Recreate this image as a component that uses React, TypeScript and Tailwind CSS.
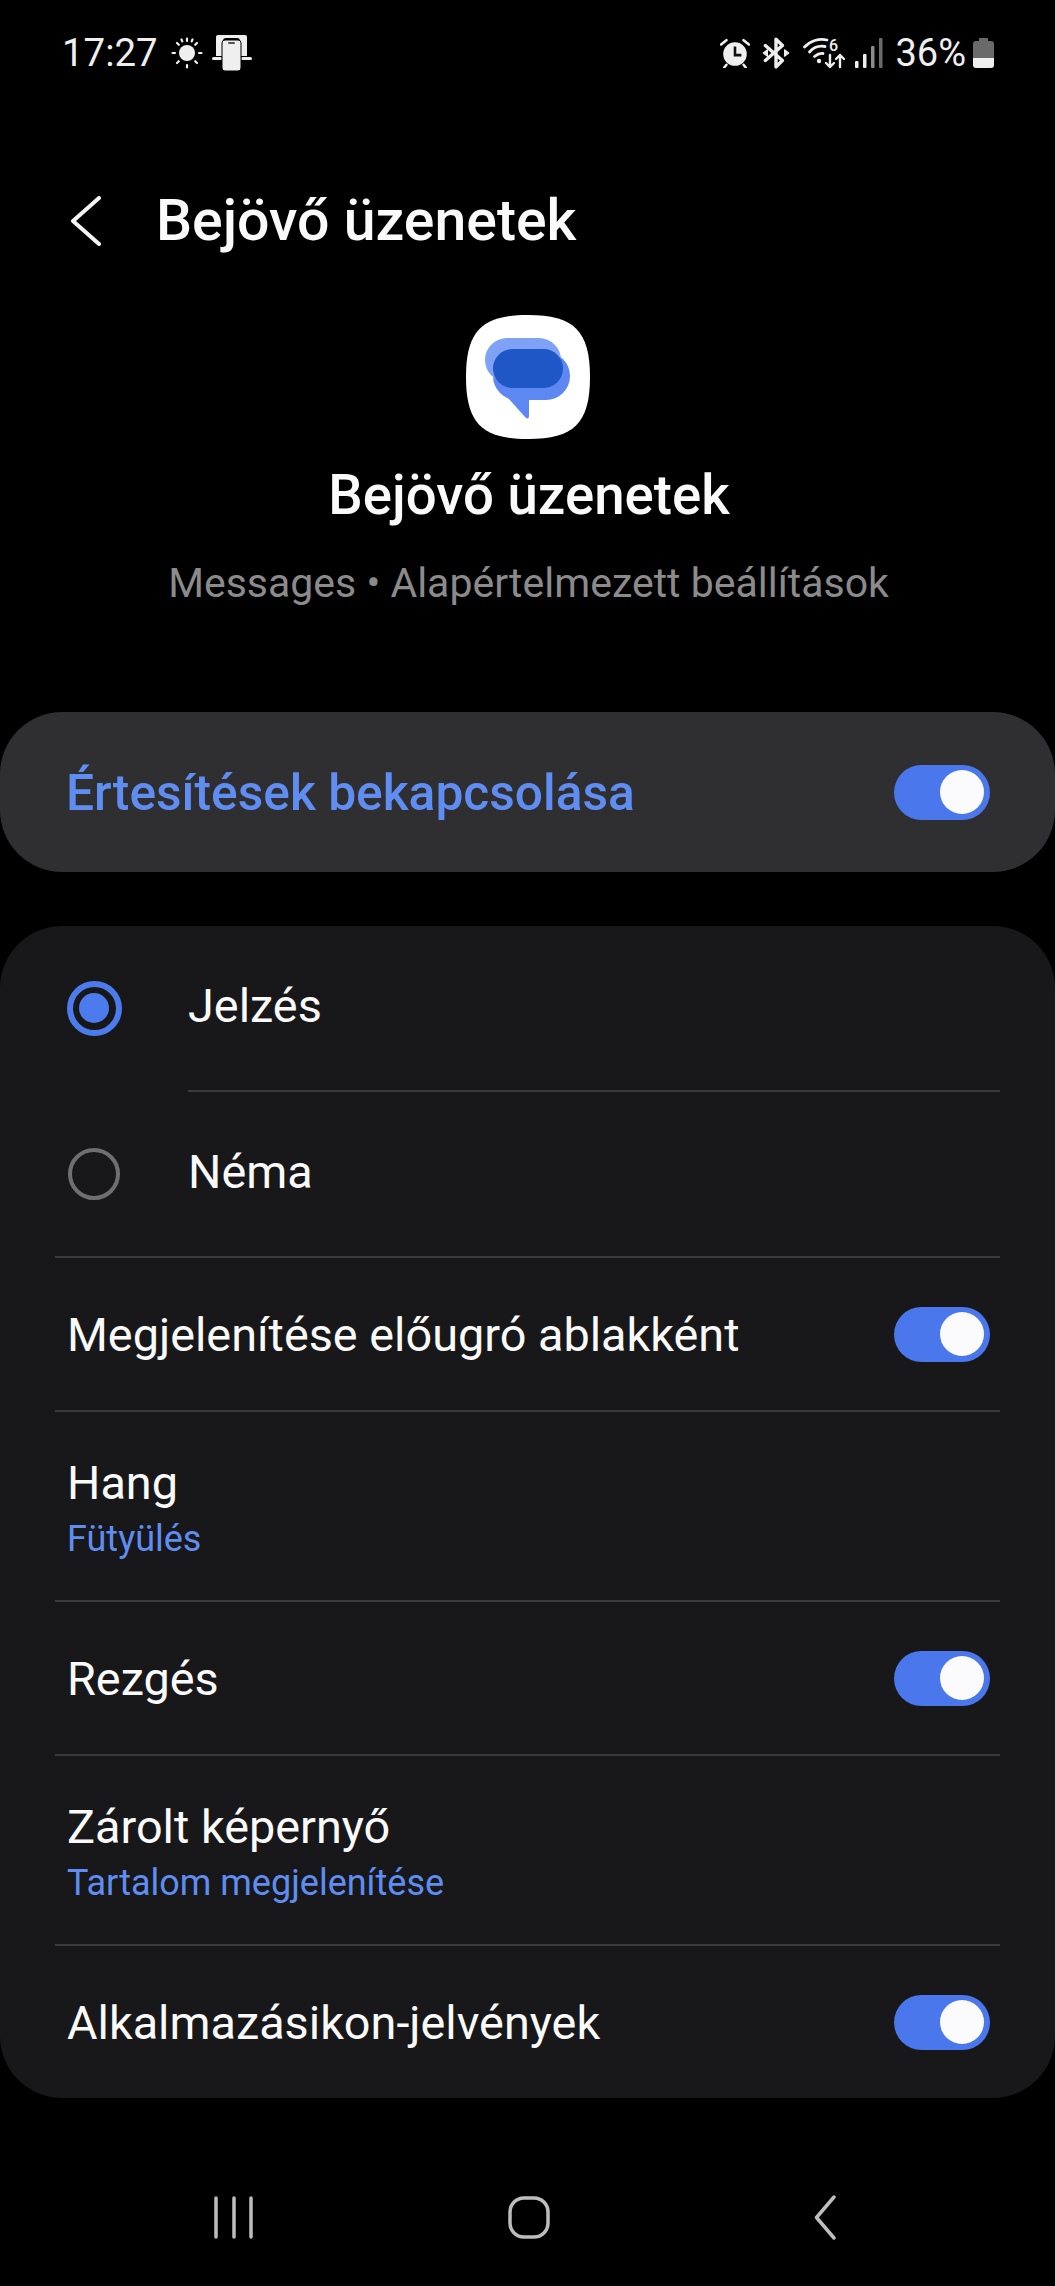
import React from "react";

const font = { fontFamily: "Roboto, 'Liberation Sans', sans-serif" };

function Toggle() {
  return (
    <div className="w-[96px] h-[55px] rounded-full bg-[#4a77ec] flex items-center justify-end pr-[6px] shrink-0">
      <div className="w-[44px] h-[44px] rounded-full bg-[#fbfbfd]" />
    </div>
  );
}

function Divider({ inset = false }: { inset?: boolean }) {
  return <div className={`h-[2px] bg-[#3a3a3c] mr-[55px] ${inset ? "ml-[188px]" : "ml-[55px]"}`} />;
}

function ToggleRow({ label }: { label: string }) {
  return (
    <div className="h-[152px] flex items-center justify-between pl-[67px] pr-[65px]">
      <span className="pt-[2px] text-[46.8px] leading-[56px] text-[#fafafa]">{label}</span>
      <Toggle />
    </div>
  );
}

function SubRow({ label, sub }: { label: string; sub: string }) {
  return (
    <div className="h-[188px] flex flex-col justify-center pt-[2px] pl-[67px] pr-[65px]">
      <span className="text-[46.8px] leading-[56px] text-[#fafafa]">{label}</span>
      <span className="text-[36px] leading-[42px] mt-[7px] text-[#5f8df2]">{sub}</span>
    </div>
  );
}

function RadioRow({ label, selected }: { label: string; selected?: boolean }) {
  return (
    <div className="h-[164px] flex items-center pl-[66px]">
      <div className="w-[56px] flex justify-center shrink-0">
        {selected ? (
          <div className="w-[55px] h-[55px] rounded-full border-[6px] border-[#4c7bee] flex items-center justify-center">
            <div className="w-[30px] h-[30px] rounded-full bg-[#4c7bee]" />
          </div>
        ) : (
          <div className="w-[52px] h-[52px] rounded-full border-[4px] border-[#6f6f70]" />
        )}
      </div>
      <span className="ml-[66px] mb-[4px] text-[46.8px] leading-[56px] text-[#fafafa]">{label}</span>
    </div>
  );
}

function SunIcon() {
  return (
    <svg width="32" height="32" viewBox="0 0 32 32" fill="#efefef" stroke="#efefef" strokeWidth="2.2" strokeLinecap="round">
      <circle cx="16" cy="16" r="8" stroke="none" />
      <path d="M16 1.5v2.5M16 28v2.5M1.5 16H4M28 16h2.5M6 6l1.8 1.8M24.2 24.2L26 26M6 26l1.8-1.8M24.2 7.8L26 6M10.5 2.5l.8 1.9M21.5 2.5l-.8 1.9" />
    </svg>
  );
}

function DeviceIcon() {
  return (
    <svg width="40" height="36" viewBox="0 0 40 36">
      <path d="M6 0h27a2 2 0 0 1 2 2v19h-2V2.500H6V21H4V2a2 2 0 0 1 2-2z" fill="#efefef" />
      <path d="M6 2h27v19h-5V6a3 3 0 0 0-3-3H14a3 3 0 0 0-3 3v15H6z" fill="#efefef" />
      <rect x="0" y="22" width="10" height="3" rx="1.500" fill="#efefef" />
      <rect x="29" y="22" width="11" height="3" rx="1.500" fill="#efefef" />
      <rect x="10" y="5" width="19" height="31" rx="3" fill="#efefef" stroke="#000" strokeWidth="1" />
      <rect x="16" y="7" width="7" height="2" rx="1" fill="#555" />
    </svg>
  );
}

function AlarmIcon() {
  return (
    <svg width="30" height="30" viewBox="0 0 28 28">
      <circle cx="14" cy="15" r="11" fill="#efefef" />
      <path d="M1 6l5-4M27 6l-5-4M6 25l-2 2.500M22 25l2 2.500" stroke="#efefef" strokeWidth="2.400" strokeLinecap="round" fill="none" />
      <path d="M14 8v8h6" stroke="#111" strokeWidth="2.400" fill="none" />
    </svg>
  );
}

function BluetoothIcon() {
  return (
    <svg width="28" height="32" viewBox="0 0 26 30" fill="none" stroke="#efefef" strokeWidth="3.200" strokeLinecap="round" strokeLinejoin="round">
      <path d="M3 8l16 14-6 6V2l6 6L3 22" />
      <path d="M21 12l4 3-4 3zM5 12L1 15l4 3z" fill="#efefef" strokeWidth="1" />
    </svg>
  );
}

function WifiIcon() {
  return (
    <svg className="overflow-visible" width="44" height="32" viewBox="0 0 44 32" fill="none" stroke="#efefef" strokeLinecap="round" strokeLinejoin="round">
      <path d="M1.500 10C7 4 16 1 24 3" strokeWidth="2.800" />
      <path d="M6.500 15C10 11 16 8.500 22 9.500" strokeWidth="2.800" />
      <path d="M11.500 19.500C14 17.500 17 16 20 16.500" strokeWidth="2.800" />
      <circle cx="16" cy="24" r="2.200" fill="#efefef" stroke="none" />
      <path d="M27 18v12M23 26l4 4 4-4M37 30V18M33 22l4-4 4 4" strokeWidth="2.400" />
      <text x="26" y="14" fontSize="16" fontWeight="500" fill="#efefef" stroke="none" style={font}>6</text>
    </svg>
  );
}

function SignalIcon() {
  return (
    <svg width="28" height="30" viewBox="0 0 28 30">
      <rect x="0" y="23" width="3.500" height="7" rx="1" fill="#efefef" />
      <rect x="8" y="16" width="3.500" height="14" rx="1" fill="#efefef" />
      <rect x="16" y="8" width="3.500" height="22" rx="1" fill="#8a8a8a" />
      <rect x="24" y="0" width="3.500" height="30" rx="1" fill="#6a6a6a" />
    </svg>
  );
}

function BatteryIcon() {
  return (
    <svg width="21" height="30" viewBox="0 0 21 30">
      <path d="M6 0h9v3h3a3 3 0 0 1 3 3v15H0V6a3 3 0 0 1 3-3h3z" fill="#6a6a6a" />
      <path d="M0 20h21v7a3 3 0 0 1-3 3H3a3 3 0 0 1-3-3z" fill="#efefef" />
    </svg>
  );
}

function MessagesIcon() {
  return (
    <svg width="124" height="124" viewBox="0 0 124 124">
      <path d="M62 0C108 0 124 16 124 62C124 108 108 124 62 124C16 124 0 108 0 62C0 16 16 0 62 0z" fill="#fff" />
      <path d="M27 66L59 102Q63 106 63 100V80z" fill="#5d88f1" />
      <rect x="27" y="37" width="77" height="48" rx="24" fill="#5d88f1" />
      <rect x="19" y="23" width="76" height="44" rx="22" fill="#7fa2f6" />
      <rect x="27" y="34" width="70" height="39" rx="19.500" fill="#1f57c7" />
    </svg>
  );
}

export default function App() {
  return (
    <div className="w-[1055px] h-[2286px] bg-black flex flex-col overflow-hidden" style={font}>
      <div className="h-[106px] flex items-center justify-between pl-[62px] pr-[61px] text-[#efefef] shrink-0">
        <div className="flex items-center">
          <span className="text-[38.400px] leading-[44px]">17:27</span>
          <span className="ml-[13px]"><SunIcon /></span>
          <span className="ml-[9px]"><DeviceIcon /></span>
        </div>
        <div className="flex items-center">
          <AlarmIcon />
          <span className="ml-[12px]"><BluetoothIcon /></span>
          <span className="ml-[13px]"><WifiIcon /></span>
          <span className="ml-[8px]"><SignalIcon /></span>
          <span className="ml-[12px] text-[38px] leading-[44px]">36%</span>
          <span className="ml-[7px]"><BatteryIcon /></span>
        </div>
      </div>

      <div className="mt-[75px] h-[80px] flex items-center shrink-0">
        <svg className="ml-[70px]" width="32" height="50" viewBox="0 0 32 50" fill="none" stroke="#f5f5f5" strokeWidth="4" strokeLinecap="round" strokeLinejoin="round">
          <path d="M29 2L3 25L29 48" />
        </svg>
        <span className="ml-[54px] text-[57.200px] leading-[64px] font-medium text-[#fafafa]">Bejövő üzenetek</span>
      </div>

      <div className="mt-[54px] flex justify-center shrink-0"><MessagesIcon /></div>
      <div className="mt-[26px] pl-[3px] text-center text-[54.600px] leading-[60px] font-medium text-[#fafafa] shrink-0">Bejövő üzenetek</div>
      <div className="mt-[33px] pl-[2px] text-center text-[41px] leading-[50px] text-[#8b8b8b] shrink-0">Messages • Alapértelmezett beállítások</div>

      <div className="mt-[104px] h-[160px] rounded-[62px] bg-[#2f2f31] flex items-center justify-between pl-[66px] pr-[65px] shrink-0">
        <span className="pt-[2px] text-[49.700px] leading-[56px] font-medium text-[#5f8df2]">Értesítések bekapcsolása</span>
        <Toggle />
      </div>

      <div className="mt-[54px] rounded-[62px] bg-[#18181a] shrink-0">
        <RadioRow label="Jelzés" selected />
        <Divider inset />
        <RadioRow label="Néma" />
        <Divider />
        <ToggleRow label="Megjelenítése előugró ablakként" />
        <Divider />
        <SubRow label="Hang" sub="Fütyülés" />
        <Divider />
        <ToggleRow label="Rezgés" />
        <Divider />
        <SubRow label="Zárolt képernyő" sub="Tartalom megjelenítése" />
        <Divider />
        <ToggleRow label="Alkalmazásikon-jelvények" />
      </div>

      <div className="mt-[97px] flex items-center shrink-0">
        <svg className="ml-[214px]" width="40" height="43" viewBox="0 0 40 43" stroke="#bdbdbd" strokeWidth="3.500" strokeLinecap="round">
          <path d="M2 2v39M20 2v39M37 2v39" />
        </svg>
        <svg className="ml-[254px]" width="42" height="43" viewBox="0 0 42 43" fill="none" stroke="#bdbdbd" strokeWidth="3.500">
          <rect x="2" y="2" width="38" height="39" rx="14" />
        </svg>
        <svg className="ml-[264px]" width="23" height="45" viewBox="0 0 23 45" fill="none" stroke="#bdbdbd" strokeWidth="3.500" strokeLinecap="round" strokeLinejoin="round">
          <path d="M20 2L2.500 22.500L20 43" />
        </svg>
      </div>
    </div>
  );
}
